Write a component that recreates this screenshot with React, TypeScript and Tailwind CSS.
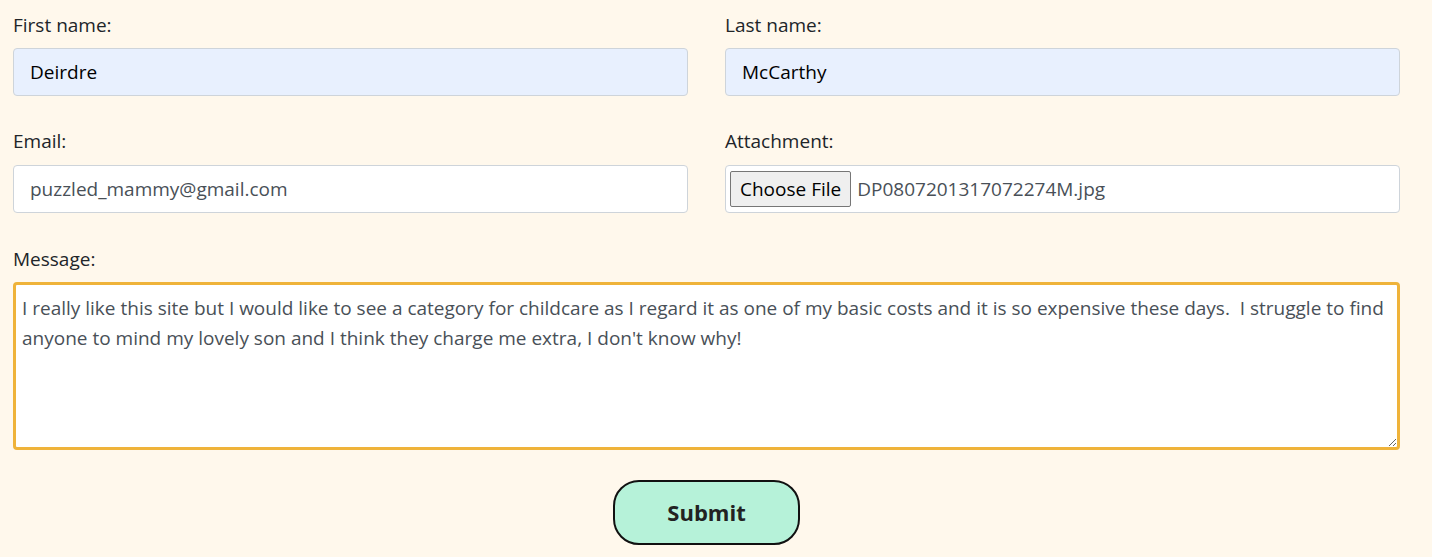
const font = { fontFamily: '"Segoe UI", "Open Sans", "Noto Sans", sans-serif' };

function Field({ label, children }: { label: string; children: React.ReactNode }) {
  return (
    <div className="flex flex-col">
      <label className="mb-[8px] text-[19px] leading-[30px] text-[#212529]">{label}</label>
      {children}
    </div>
  );
}

export default function App() {
  const message =
    "I really like this site but I would like to see a category for childcare as I regard it as one of my basic costs and it is so expensive these days.  I struggle to find anyone to mind my lovely son and I think they charge me extra, I don't know why!";

  return (
    <div className="min-h-[557px] bg-[#fff8ec] pl-[13px] pr-[32px] pt-[10px]" style={font}>
      <form className="flex flex-col" onSubmit={(e) => e.preventDefault()}>
        <div className="grid grid-cols-2 gap-x-[37px] gap-y-[30px]">
          <Field label="First name:">
            <input
              defaultValue="Deirdre"
              className="h-[48px] rounded-[4px] border border-[#ced4da] bg-[#e8f0fe] px-[16px] text-[19px] text-[#000] outline-none"
            />
          </Field>
          <Field label="Last name:">
            <input
              defaultValue="McCarthy"
              className="h-[48px] rounded-[4px] border border-[#ced4da] bg-[#e8f0fe] px-[16px] text-[19px] text-[#000] outline-none"
            />
          </Field>
          <Field label="Email:">
            <input
              defaultValue="puzzled_mammy@gmail.com"
              className="mt-[1px] h-[48px] rounded-[4px] border border-[#ced4da] bg-white px-[16px] text-[19px] text-[#495057] outline-none"
            />
          </Field>
          <Field label="Attachment:">
            <div className="mt-[1px] flex h-[48px] items-center gap-[6px] rounded-[4px] border border-[#ced4da] bg-white pl-[4px]">
              <button
                type="button"
                className="h-[36px] rounded-[2px] border border-[#767676] bg-[#efefef] px-[9px] text-[19px] leading-none text-black"
              >
                Choose File
              </button>
              <span className="text-[19px] text-[#495057]">DP0807201317072274M.jpg</span>
            </div>
          </Field>
          <div className="col-span-2 pt-[1px]">
            <Field label="Message:">
              <textarea
                defaultValue={message}
                className="h-[168px] rounded-[4px] border-[3px] border-[#efb33a] bg-white px-[6px] py-[8px] text-[19px] leading-[30px] text-[#495057] outline-none"
              />
            </Field>
          </div>
        </div>
        <div className="mt-[30px] flex justify-center">
          <button
            type="submit"
            className="h-[65px] w-[187px] rounded-[26px] border-2 border-[#111] bg-[#b6f2d9] text-[22px] font-bold text-[#222]"
          >
            Submit
          </button>
        </div>
      </form>
    </div>
  );
}
